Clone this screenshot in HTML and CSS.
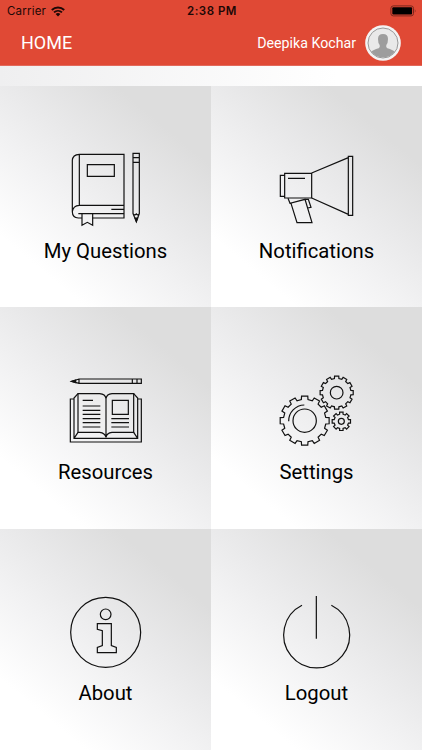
FILE: index.html
```html
<!doctype html>
<html lang="en">
<head>
    <meta charset="UTF-8">
    <title>Home</title>
    <link rel="stylesheet" href="styles.css">
</head>
<body>
<header id="header">
    <div class="status">
        <div class="carrier">
            <span>Carrier</span>
            <svg width="14" height="11" viewBox="0 0 14 11">
                <path d="M0.8 4 A9 9 0 0 1 13.2 4 M3 6.4 A6 6 0 0 1 11 6.4" fill="none" stroke="#1c0806" stroke-width="1.9"/>
                <path d="M4.6 8 A3.8 3.8 0 0 1 9.4 8 L7 10.6 Z" fill="#1c0806"/>
            </svg>
        </div>
        <div class="time">2:38 PM</div>
        <svg class="battery" width="27" height="12" viewBox="0 0 27 12">
            <rect x="0.9" y="0.9" width="22.6" height="10" rx="2.4" fill="none" stroke="#7a271c" stroke-width="1"/>
            <rect x="2.3" y="2.3" width="19.8" height="7.2" rx="1" fill="#000"/>
            <path d="M24.8 4 Q26.4 5.9 24.8 7.8 Z" fill="#7a271c"/>
        </svg>
    </div>
    <div class="bar">
        <h1>HOME</h1>
        <span class="user">Deepika Kochar</span>
        <svg class="avatar" width="36" height="36" viewBox="0 0 108 108">
            <circle cx="54" cy="54" r="53.5" fill="#f3f3f3"/>
            <circle cx="54" cy="54" r="45" fill="#e9e9e9" stroke="#999" stroke-width="3"/>
            <path d="M19 80 Q24 75 41 70 Q46 67 44 60 Q39 54 39 42 Q39 27 54 27 Q69 27 69 42 Q69 54 64 60 Q62 67 67 70 Q84 75 89 80 Q76 97 54 97 Q32 97 19 80 Z" fill="#9d9d9d"/>
        </svg>
    </div>
</header>
<ul id="menu">
    <li>
        <svg viewBox="0 0 273 255">
            <path d="M58 28 H192 V219 H98 M66 219 H55 Q37 217 37 200 V46 Q38 29 58 28 V181 M192 181 H58 Q39 182 37 200 M55 206 H192 M154 193 H192"/>
            <path d="M82 59 H163 V94 H82 Z M66 206 V241 L82 232 L98 241 V206"/>
            <path d="M219 25 H238 V206 L229 229 L219 206 Z M219 38 H238 M219 52 H238 M219 206 Q224 213 229 207 Q234 213 238 206"/>
            <path d="M225 219 H233 L229 230 Z" fill="#111"/>
        </svg>
        <p>My Questions</p>
    </li>
    <li>
        <svg viewBox="3 0 273 255">
            <path d="M44 85 H125 V159 H44 Z M31 91 H44 V154 H31 Z M54 100 H105"/>
            <path d="M125 84 L235 38 M125 159 L235 208 M235 34 H248 V211 H235 Z"/>
            <path d="M54 160 L60 175 L105 163 L126 233 H81 L63 175 M105 163 H115 L123 187 L113 189"/>
        </svg>
        <p>Notifications</p>
    </li>
    <li>
        <svg viewBox="0 -11 273 255">
            <path d="M57 28 H244 V41 H57 L35 35 Z M57 28 V41 M217 28 V41 M231 28 V41"/>
            <path d="M35 35 L47 31 V39 Z" fill="#111"/>
            <path d="M42 88 H31 V217 H244 V88 H233"/>
            <path d="M54 72 L42 85 V206 H233 V85 L221 72 M42 206 L54 188 M233 206 L221 188"/>
            <path d="M54 72 H119 Q136 73 138 87 Q140 73 156 72 H221 V188 H156 Q140 190 138 203 Q135 190 119 188 H54 Z M138 87 V203"/>
            <path d="M68 92 H99 M68 109 H121 M68 122 H121 M68 134 H121 M68 147 H121 M68 159 H121 M68 172 H121"/>
            <path d="M157 92 H205 V134 H157 Z M154 147 H207 M154 159 H207 M154 172 H207"/>
        </svg>
        <p>Resources</p>
    </li>
    <li>
        <svg viewBox="3 -11 273 255">
            <path class="gear" data-x="104" data-y="153" data-r="74" data-depth="10" data-teeth="12"/>
            <circle cx="104" cy="153" r="35"/>
            <path d="M56 155 A48 48 0 0 1 103 106"/>
            <path class="gear" data-x="200" data-y="69" data-r="50" data-depth="7" data-teeth="12"/>
            <circle cx="200" cy="69" r="19"/>
            <path class="gear" data-x="214" data-y="155" data-r="28" data-depth="6" data-teeth="8"/>
            <circle cx="214" cy="155" r="9"/>
        </svg>
        <p>Settings</p>
    </li>
    <li>
        <svg viewBox="0 -7 273 255">
            <circle cx="137" cy="126" r="105"/>
            <circle cx="137" cy="72" r="16"/>
            <path d="M112 100 H154 V166 L169 171 V187 H112 V171 L127 166 V121 L112 117 Z"/>
        </svg>
        <p>About</p>
    </li>
    <li>
        <svg viewBox="3 -7 273 255">
            <path d="M139 17 V145 M96 45 A99 99 0 1 0 184 45"/>
        </svg>
        <p>Logout</p>
    </li>
</ul>
<script>
    var aGear = document.getElementsByClassName('gear');
    function drawGear(gear){
        var d = gear.dataset;
        var step = Math.PI * 2 / d.teeth;
        var points = [];
        function add(r, a){
            points.push((+d.x + r * Math.sin(a)).toFixed(1) + ' ' + (+d.y - r * Math.cos(a)).toFixed(1));
        }
        for (var i = 0; i < d.teeth; i++) {
            add(d.r - d.depth, step * (i - 0.3));
            add(+d.r, step * (i - 0.24));
            add(+d.r, step * (i + 0.24));
            add(d.r - d.depth, step * (i + 0.3));
        }
        gear.setAttribute('d', 'M' + points.join('L') + 'Z');
    }
    for (var i = 0; i < aGear.length; i++) {
        drawGear(aGear[i]);
    }
</script>
</body>
</html>
```
FILE: styles.css
```css
*{
    margin: 0;
    padding: 0;
    box-sizing: border-box;
}
body{
    height: 750px;
    display: flex;
    flex-direction: column;
    font-family: Roboto, sans-serif;
    background: linear-gradient(90deg, #efeff0, #fff 80%);
    overflow: hidden;
}
ul{
    list-style: none;
}
#header{
    height: 66px;
    background: #e04935;
    border-bottom: 1px solid #e2695b;
}
.status{
    height: 22px;
    padding: 0 5px 0 7px;
    display: grid;
    grid-template-columns: 1fr auto 1fr;
    align-items: center;
    font: 11.5px/22px Inter, sans-serif;
    letter-spacing: 0.2px;
    color: #1c0806;
}
.carrier{
    display: flex;
    align-items: center;
    gap: 5px;
}
.time{
    font-weight: 600;
    letter-spacing: 0.5px;
}
.battery{
    justify-self: end;
}
.bar{
    height: 42px;
    padding: 0 21px;
    display: flex;
    align-items: center;
    color: #fff;
}
.bar h1{
    flex: 1;
    font-size: 18px;
    line-height: 20px;
    font-weight: 400;
}
.user{
    font-size: 14.2px;
    margin-right: 9px;
}
#menu{
    flex: 1;
    margin-top: 20px;
    display: grid;
    grid-template-columns: 1fr 1fr;
    grid-template-rows: repeat(3, 1fr);
}
#menu li{
    padding-top: 59px;
    text-align: center;
    background: linear-gradient(40deg, #fff 18%, #f2f2f3 42%, #e9e9ea 58%, #dddddd 80%);
}
#menu svg{
    display: block;
    width: 91px;
    height: 85px;
    margin: 0 auto;
    fill: none;
    stroke: #111;
    stroke-width: 3.6;
}
#menu p{
    margin-top: 7.5px;
    font-size: 20.3px;
    line-height: 26px;
    color: #000;
}
```
